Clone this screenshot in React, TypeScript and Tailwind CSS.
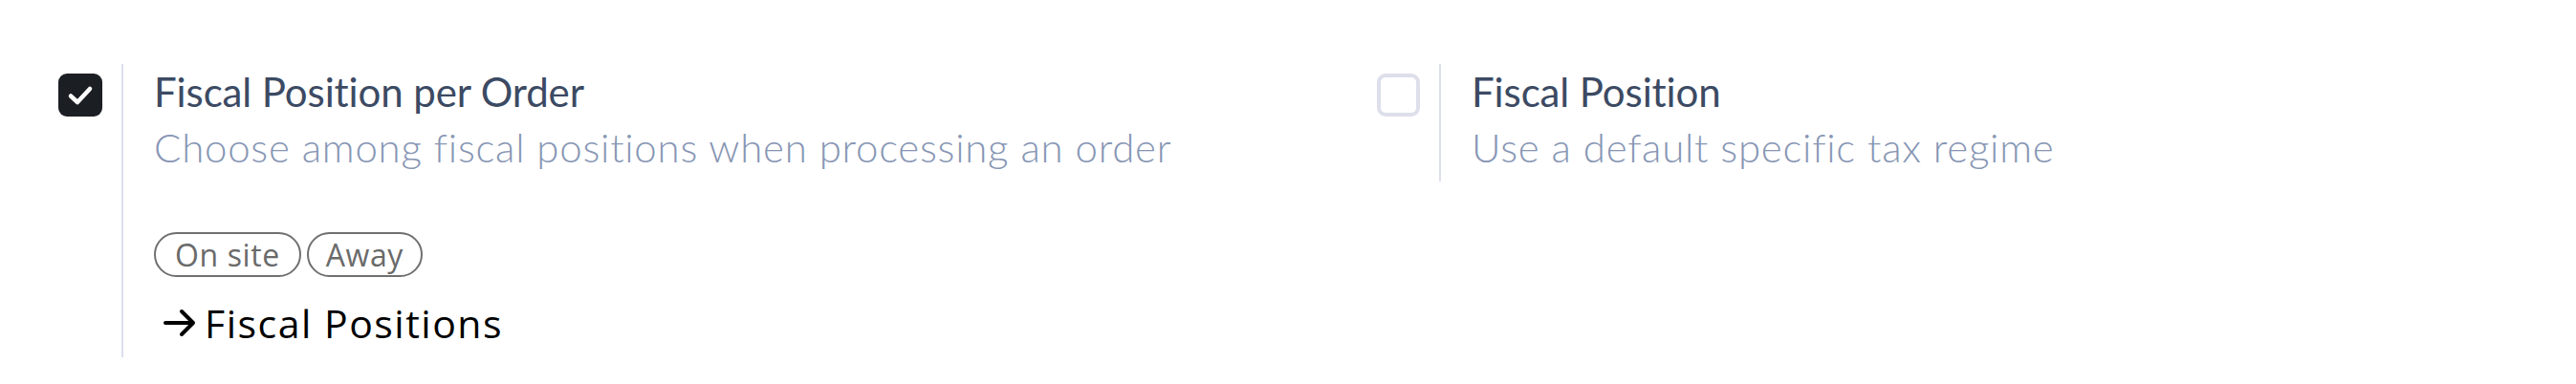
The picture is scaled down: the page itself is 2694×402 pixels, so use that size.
import React from 'react';

const Check = () => (
  <svg width="28" height="24" viewBox="0 0 28 24" fill="none">
    <path d="M4 12.5 L11 19 L24 5" stroke="white" strokeWidth="4.5" strokeLinecap="round" strokeLinejoin="round" />
  </svg>
);

const Arrow = () => (
  <svg width="36" height="30" viewBox="0 0 36 30" fill="none">
    <path d="M3 15 H32 M20 3 L32 15 L20 27" stroke="black" strokeWidth="4" strokeLinecap="round" strokeLinejoin="round" />
  </svg>
);

const Setting: React.FC<{
  checked: boolean;
  title: string;
  help: string;
  children?: React.ReactNode;
  width: string;
}> = ({ checked, title, help, children, width }) => (
  <div className={`flex items-start ${width}`}>
    <div className="pt-[10px]">
      {checked ? (
        <div className="w-[46px] h-[45px] rounded-[9px] bg-[#1b1e22] flex items-center justify-center">
          <Check />
        </div>
      ) : (
        <div className="w-[45px] h-[45px] rounded-[9px] border-[4px] border-[#dde0ea] bg-white" />
      )}
    </div>
    <div className="ml-[20px] border-l-2 border-[#dbe0eb] pl-[32px] pt-[4px] pb-[3px]">
      <div className="text-[42px] leading-[50px] tracking-[-0.1px] text-[#3c4a63]" style={{ fontFamily: 'Lato, sans-serif' }}>
        {title}
      </div>
      <div className="text-[42px] leading-[66px] tracking-[0.75px] font-light text-[#8796b4]" style={{ fontFamily: 'Lato, sans-serif' }}>
        {help}
      </div>
      {children}
    </div>
  </div>
);

export default function App() {
  return (
    <div className="w-[2694px] h-[402px] bg-white pt-[67px] pl-[61px] flex overflow-hidden">
      <Setting
        checked
        width="w-[1379px]"
        title="Fiscal Position per Order"
        help="Choose among fiscal positions when processing an order"
      >
        <div className="flex gap-[6px] mt-[56px]" style={{ fontFamily: '"Open Sans", sans-serif' }}>
          <span className="h-[47px] px-[20px] rounded-full border-2 border-[#707070] text-[#6a6a6a] text-[32px] tracking-[0.6px] leading-[43px]">
            On site
          </span>
          <span className="h-[47px] px-[18px] rounded-full border-2 border-[#707070] text-[#6a6a6a] text-[32px] tracking-[0.6px] leading-[43px]">
            Away
          </span>
        </div>
        <div className="flex items-center gap-[8px] mt-[21px] mb-[6px] ml-[9px]">
          <Arrow />
          <span className="text-[41px] leading-[54px] tracking-[1.5px] text-black" style={{ fontFamily: '"Open Sans", sans-serif' }}>
            Fiscal Positions
          </span>
        </div>
      </Setting>
      <Setting
        checked={false}
        width="flex-1"
        title="Fiscal Position"
        help="Use a default specific tax regime"
      />
    </div>
  );
}
